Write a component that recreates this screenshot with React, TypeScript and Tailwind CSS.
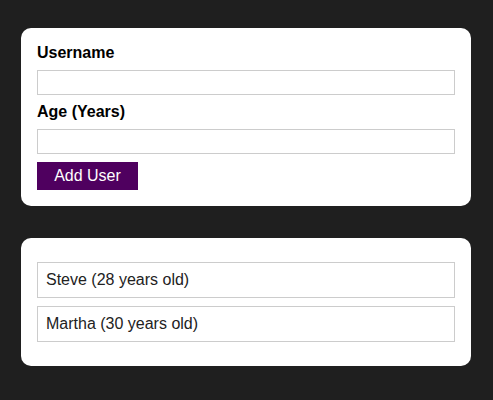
import React from "react";

export default function App() {
  const users = [
    { name: "Steve", age: 28 },
    { name: "Martha", age: 30 },
  ];
  return (
    <div
      className="min-h-[400px] w-full bg-[#1f1f1f] pt-[28px] pl-[21px]"
      style={{ fontFamily: '"Liberation Sans", Arial, sans-serif' }}
    >
      <div className="flex w-[450px] flex-col gap-[32px]">
        <form className="flex flex-col rounded-[10px] bg-white p-[16px]">
          <label className="mb-[8px] block text-[16px] leading-[18px] font-bold text-black">
            Username
          </label>
          <input
            type="text"
            className="mb-[8px] block h-[25px] w-full border border-[#cccccc] bg-white px-1 outline-none"
          />
          <label className="mb-[8px] block text-[16px] leading-[18px] font-bold text-black">
            Age (Years)
          </label>
          <input
            type="number"
            className="mb-[8px] block h-[25px] w-full border border-[#cccccc] bg-white px-1 outline-none"
          />
          <button
            type="button"
            className="h-[28px] w-[101px] bg-[#4f005f] text-[16px] leading-[18px] text-white"
          >
            Add User
          </button>
        </form>
        <div className="rounded-[10px] bg-white px-[16px] py-[24px]">
          <ul className="flex flex-col gap-[8px]">
            {users.map((u) => (
              <li
                key={u.name}
                className="h-[36px] border border-[#cccccc] px-[8px] text-[16px] leading-[34px] text-[#222222]"
              >
                {u.name} ({u.age} years old)
              </li>
            ))}
          </ul>
        </div>
      </div>
    </div>
  );
}
